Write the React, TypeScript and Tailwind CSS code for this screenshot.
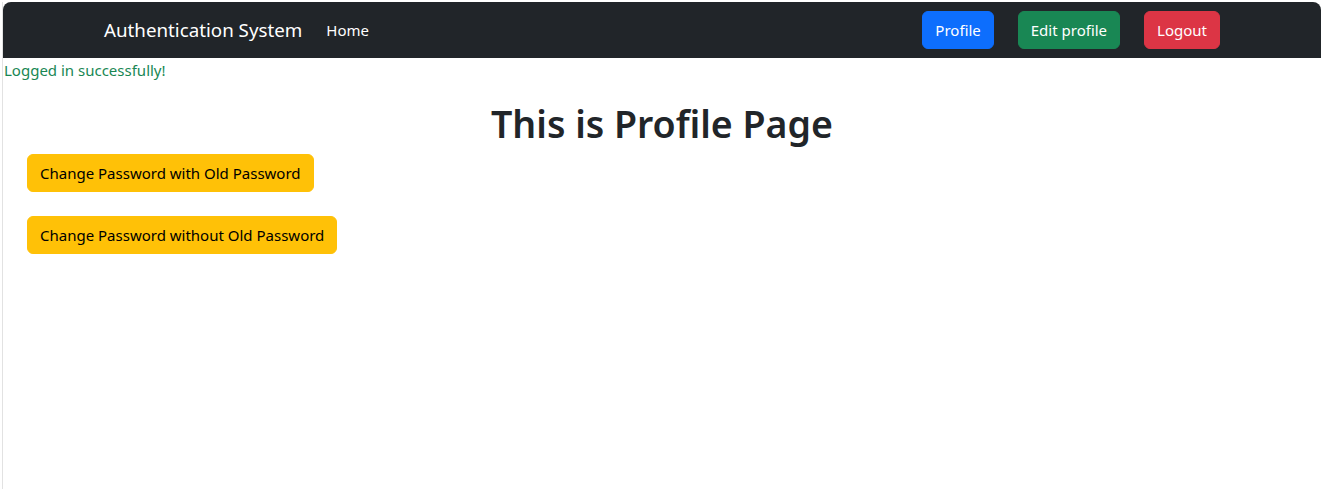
export default function App() {
  return (
    <div className="min-h-[489px] bg-white pt-[2px] pl-[2px] font-['Noto_Sans','Open_Sans',sans-serif] text-[15px] text-[#212529]">
      <div className="min-h-[487px] border-l border-[#e2e2e2]">
        <nav className="bg-[#212529] rounded-t-lg py-2">
          <div className="max-w-[1140px] mx-auto px-3 flex items-center justify-between">
            <div className="flex items-center">
              <span className="text-white text-[18.75px] leading-[30px] py-[5px] mr-4">Authentication System</span>
              <span className="text-white px-2 leading-6">Home</span>
            </div>
            <div className="flex items-center gap-6">
              <button className="bg-[#0d6efd] text-white border border-[#0d6efd] rounded-md px-3 py-[6px] leading-6">Profile</button>
              <button className="bg-[#198754] text-white border border-[#198754] rounded-md px-3 py-[6px] leading-6">Edit profile</button>
              <button className="bg-[#dc3545] text-white border border-[#dc3545] rounded-md px-3 py-[6px] leading-6">Logout</button>
            </div>
          </div>
        </nav>
        <p className="text-[#198754] leading-6 pl-px">Logged in successfully!</p>
        <h1 className="text-[37.5px] font-semibold leading-[48px] text-center mt-[18px] mb-[6px]">This is Profile Page</h1>
        <div className="flex flex-col items-start gap-6 px-6">
          <button className="bg-[#ffc107] text-black border border-[#ffc107] rounded-md px-3 py-[6px] leading-6">Change Password with Old Password</button>
          <button className="bg-[#ffc107] text-black border border-[#ffc107] rounded-md px-3 py-[6px] leading-6">Change Password without Old Password</button>
        </div>
      </div>
    </div>
  )
}
